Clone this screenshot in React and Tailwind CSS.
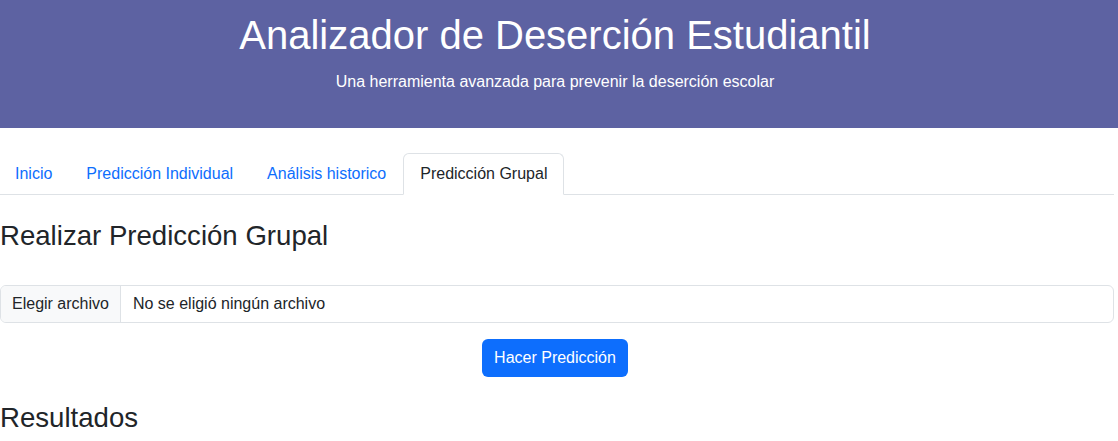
export default function App() {
  const tabs = ["Inicio", "Predicción Individual", "Análisis historico"];
  return (
    <div className="w-[1118px] min-h-[441px] bg-white text-[#212529]" style={{ fontFamily: '"Liberation Sans", Arial, sans-serif' }}>
      <header className="h-[128px] bg-[#5d62a2] text-white">
        <div className="w-[1110px] pt-[11px] text-center">
          <h1 className="text-[40px] leading-[48px] font-normal">Analizador de Deserción Estudiantil</h1>
          <p className="mt-[11px] text-[16px] leading-[1.5]">Una herramienta avanzada para prevenir la deserción escolar</p>
        </div>
      </header>
      <main className="w-[1114px] pt-[25px]">
        <nav className="-ml-[2px] flex border-b border-[#dee2e6] text-[16px] leading-[24px]">
          {tabs.map((t) => (
            <a key={t} className="-mb-px block rounded-t-[6px] border border-transparent px-4 py-2 text-[#0d6efd]">{t}</a>
          ))}
          <a className="-mb-px block rounded-t-[6px] border border-[#dee2e6] border-b-white bg-white px-4 py-2 text-[#212529]">Predicción Grupal</a>
        </nav>
        <h3 className="mt-[24px] text-[27.6px] leading-[33px] font-normal">Realizar Predicción Grupal</h3>
        <div className="mt-[33px] flex h-[38px] overflow-hidden rounded-[6px] border border-[#dee2e6] text-[16px]">
          <div className="flex items-center border-r border-[#dee2e6] bg-[#f8f9fa] px-[11px]">Elegir archivo</div>
          <div className="flex items-center px-[12px]">No se eligió ningún archivo</div>
        </div>
        <div className="mt-[16px] flex w-[1110px] justify-center">
          <button className="h-[38px] rounded-[6px] bg-[#0d6efd] px-[12px] text-[16px] text-white">Hacer Predicción</button>
        </div>
        <h3 className="mt-[24px] text-[27.6px] leading-[33px] font-normal">Resultados</h3>
      </main>
    </div>
  );
}
